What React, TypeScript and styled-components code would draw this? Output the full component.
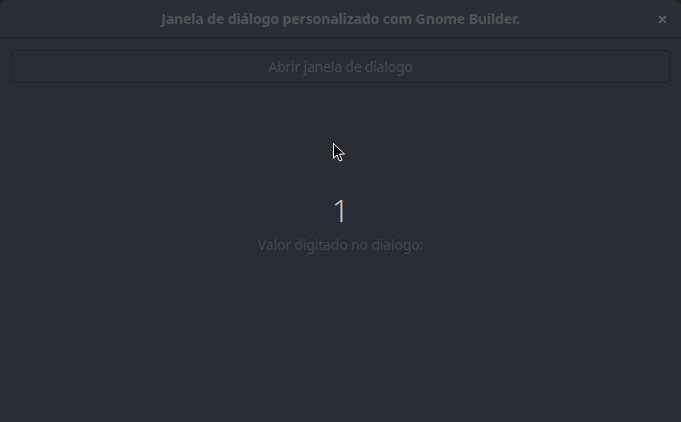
import styled, { createGlobalStyle } from "styled-components";

const Global = createGlobalStyle`
  html, body { margin: 0; padding: 0; background: #1f2127; }
  * { box-sizing: border-box; }
`;

const Window = styled.div`
  position: relative;
  width: 681px;
  height: 422px;
  background: #292c33;
  border-radius: 6px 6px 0 0;
  overflow: hidden;
  font-family: "Noto Sans", "Open Sans", sans-serif;
  display: flex;
  flex-direction: column;
`;

const HeaderBar = styled.header`
  height: 38px;
  display: flex;
  align-items: center;
  justify-content: center;
  position: relative;
  background: #2a2d35;
  border-bottom: 1px solid #1f2127;
`;

const Title = styled.h1`
  margin: 0;
  font-size: 14px;
  font-weight: 700;
  color: #51545b;
  letter-spacing: -0.1px;
`;

const CloseButton = styled.span`
  position: absolute;
  right: 12px;
  top: 12px;
  width: 14px;
  height: 14px;
  display: flex;
  align-items: center;
  justify-content: center;
`;

const Body = styled.main`
  flex: 1;
  display: flex;
  flex-direction: column;
  padding: 12px 11px;
`;

const OpenButton = styled.button`
  height: 33px;
  width: 100%;
  background: #292c33;
  border: 1px solid #1f2127;
  border-radius: 4px;
  color: #4a4d54;
  font-family: inherit;
  font-size: 14px;
  letter-spacing: -0.2px;
  cursor: pointer;
`;

const Result = styled.section`
  margin-top: 108px;
  display: flex;
  flex-direction: column;
  align-items: center;
`;

const Value = styled.div`
  font-size: 31px;
  line-height: 38px;
  color: #c9cacc;
  font-weight: 300;
`;

const Label = styled.div`
  margin-top: 6px;
  font-size: 14px;
  letter-spacing: -0.15px;
  color: #45484f;
`;

const Pointer = styled.svg`
  position: absolute;
  left: 333px;
  top: 143px;
`;

export default function App() {
  return (
    <>
      <Global />
      <Window>
        <HeaderBar>
          <Title>Janela de diálogo personalizado com Gnome Builder.</Title>
          <CloseButton>
            <svg width="9" height="9" viewBox="0 0 9 9">
              <path d="M1 1L8 8M8 1L1 8" stroke="#5c5f66" strokeWidth="1.8" />
            </svg>
          </CloseButton>
        </HeaderBar>
        <Body>
          <OpenButton>Abrir janela de dialogo</OpenButton>
          <Result>
            <Value>1</Value>
            <Label>Valor digitado no dialogo:</Label>
          </Result>
        </Body>
        <Pointer width="14" height="20" viewBox="0 0 14 20">
          <path d="M0.5 0.5L0.5 15L4 12L6.5 18L9 17L6.5 11L11.5 11Z" fill="#000" stroke="#fff" strokeWidth="1" />
        </Pointer>
      </Window>
    </>
  );
}
